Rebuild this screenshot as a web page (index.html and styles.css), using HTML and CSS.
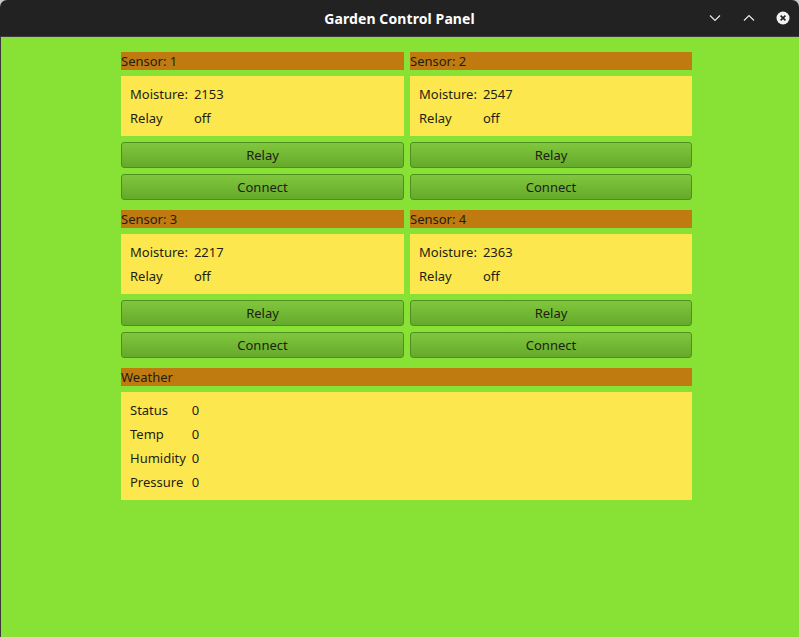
FILE: index.html
```html
<!DOCTYPE html>
<html>
<head>
<meta charset="utf-8">
<title>Garden Control Panel</title>
<link rel="stylesheet" href="styles.css">
</head>
<body>
<div class="window">
  <header class="titlebar">
    <div class="title">Garden Control Panel</div>
    <div class="controls">
      <svg class="ctl" width="16" height="16" viewBox="0 0 16 16"><path d="M3 5.5 L8 10.5 L13 5.5" fill="none" stroke="#e8e8e8" stroke-width="1.2"/></svg>
      <svg class="ctl" width="16" height="16" viewBox="0 0 16 16"><path d="M3 10.5 L8 5.5 L13 10.5" fill="none" stroke="#e8e8e8" stroke-width="1.2"/></svg>
      <svg class="ctl" width="16" height="16" viewBox="0 0 16 16"><circle cx="8" cy="8" r="6.5" fill="#f2f2f2"/><path d="M5.6 5.6 L10.4 10.4 M10.4 5.6 L5.6 10.4" stroke="#222" stroke-width="1.6"/></svg>
    </div>
  </header>
  <main class="content">
    <div class="grid">
      <section class="sensor">
        <div class="head">Sensor: 1</div>
        <div class="panel">
          <span>Moisture:</span><span>2153</span>
          <span>Relay</span><span>off</span>
        </div>
        <button class="btn">Relay</button>
        <button class="btn">Connect</button>
      </section>
      <section class="sensor">
        <div class="head">Sensor: 2</div>
        <div class="panel">
          <span>Moisture:</span><span>2547</span>
          <span>Relay</span><span>off</span>
        </div>
        <button class="btn">Relay</button>
        <button class="btn">Connect</button>
      </section>
      <section class="sensor">
        <div class="head">Sensor: 3</div>
        <div class="panel">
          <span>Moisture:</span><span>2217</span>
          <span>Relay</span><span>off</span>
        </div>
        <button class="btn">Relay</button>
        <button class="btn">Connect</button>
      </section>
      <section class="sensor">
        <div class="head">Sensor: 4</div>
        <div class="panel">
          <span>Moisture:</span><span>2363</span>
          <span>Relay</span><span>off</span>
        </div>
        <button class="btn">Relay</button>
        <button class="btn">Connect</button>
      </section>
      <section class="weather">
        <div class="head">Weather</div>
        <div class="panel">
          <span>Status</span><span>0</span>
          <span>Temp</span><span>0</span>
          <span>Humidity</span><span>0</span>
          <span>Pressure</span><span>0</span>
        </div>
      </section>
    </div>
  </main>
</div>
</body>
</html>
```
FILE: styles.css
```css
html, body {
  margin: 0;
  padding: 0;
  height: 100%;
  background: #c8c8c8;
}
body {
  font-family: "Noto Sans", "Open Sans", sans-serif;
  font-size: 13px;
  color: #1e1e12;
}
.window {
  height: 637px;
  display: flex;
  flex-direction: column;
  overflow: hidden;
  border-radius: 7px 7px 0 0;
}
.titlebar {
  height: 36px;
  flex: none;
  background: #222222;
  border-bottom: 1px solid #3c3c3c;
  display: flex;
  align-items: center;
  justify-content: center;
  position: relative;
}
.title {
  color: #ffffff;
  font-weight: bold;
  font-size: 14px;
  font-family: "Noto Sans", "Open Sans", sans-serif;
  letter-spacing: 0.1px;
}
.controls {
  position: absolute;
  right: 8px;
  top: 10px;
  display: flex;
  gap: 18px;
}
.ctl {
  display: block;
}
.content {
  flex: 1;
  background: #88e236;
  border-left: 1px solid #3a3a3a;
  padding: 15px 0 0 120px;
}
.grid {
  display: grid;
  grid-template-columns: 283px 282px;
  column-gap: 6px;
  row-gap: 10px;
}
.sensor {
  display: flex;
  flex-direction: column;
  gap: 6px;
}
.weather {
  grid-column: 1 / 3;
  display: flex;
  flex-direction: column;
  gap: 6px;
}
.head {
  background: #c07b10;
  height: 18px;
  line-height: 18px;
}
.panel {
  background: #fde74e;
  padding: 6px 9px;
  display: grid;
  grid-template-columns: max-content 1fr;
  column-gap: 6px;
  grid-auto-rows: 24px;
  align-items: center;
}
.btn {
  height: 26px;
  margin: 0;
  padding: 0;
  font-family: inherit;
  font-size: 13px;
  color: #1e1e12;
  border: 1px solid #4f8f20;
  border-radius: 3px;
  background: linear-gradient(to bottom, #80c73d, #65a92b);
  cursor: pointer;
}
```
